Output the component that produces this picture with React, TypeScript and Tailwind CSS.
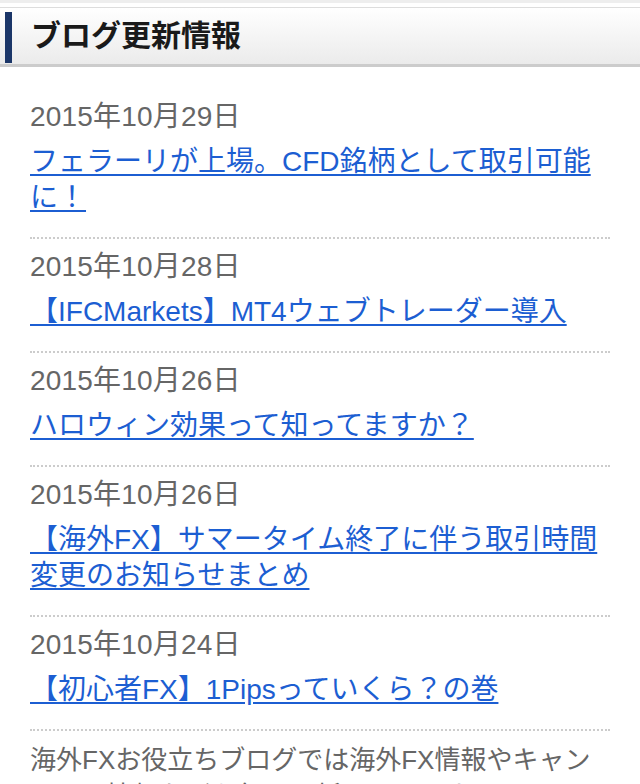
const posts = [
  { date: "2015年10月29日", title: "フェラーリが上場。CFD銘柄として取引可能に！" },
  { date: "2015年10月28日", title: "【IFCMarkets】MT4ウェブトレーダー導入" },
  { date: "2015年10月26日", title: "ハロウィン効果って知ってますか？" },
  { date: "2015年10月26日", title: "【海外FX】サマータイム終了に伴う取引時間変更のお知らせまとめ" },
  { date: "2015年10月24日", title: "【初心者FX】1Pipsっていくら？の巻" },
];

export default function App() {
  return (
    <div className="min-h-[784px] bg-white font-['Liberation_Sans','Noto_Sans_CJK_JP',sans-serif]">
      {/* Header */}
      <div className="h-[3px] bg-[#eeeeee]" />
      <div className="mt-[4px] flex h-[60px] border-t border-b-[3px] border-t-[#dddddd] border-b-[#cccccc] bg-linear-to-b from-white to-[#ebebeb] pt-[4px] pb-[1px]">
        <div className="ml-[5px] w-[7px] bg-[#1b3668]" />
        <h2 className="ml-[19px] self-center pb-[3px] text-[30px] leading-[36px] font-bold text-[#1a1a1a]">
          ブログ更新情報
        </h2>
      </div>

      {/* Posts */}
      <div className="px-[30px] pt-[22px]">
        {posts.map((post, i) => (
          <div
            key={i}
            className="border-b-2 border-dotted border-[#cccccc] pt-[10px] pb-[21px]"
          >
            <p className="text-[28px] leading-[36px] tracking-[0.2px] text-[#666666]">
              {post.date}
            </p>
            <a
              href="#"
              className="mt-[9px] block text-[28px] leading-[36px] text-[#1c5ed2] underline underline-offset-[3px]"
            >
              {post.title}
            </a>
          </div>
        ))}
        <p className="pt-[11px] text-[26px] leading-[36px] text-[#666666]">
          海外FXお役立ちブログでは海外FX情報やキャンペーン情報などを毎日更新しています。
        </p>
      </div>
    </div>
  );
}
